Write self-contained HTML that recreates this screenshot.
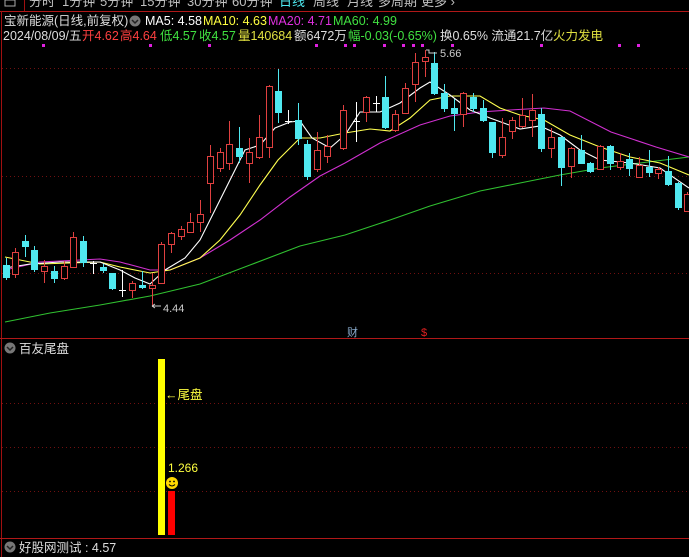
<!DOCTYPE html>
<html><head><meta charset="utf-8"><style>
body{margin:0;background:#000;width:689px;height:557px;overflow:hidden;font-family:"Liberation Sans","Noto Sans CJK SC",sans-serif}
svg{position:absolute;left:0;top:0}
</style></head><body>
<svg width="689" height="557" viewBox="0 0 689 557" font-family="Liberation Sans, Noto Sans CJK SC, sans-serif">
<rect width="689" height="557" fill="#000"/>
<!-- top menu -->
<g font-size="13" fill="#c0c0c0">
<text x="29" y="6">分时</text><text x="62" y="6">1分钟</text><text x="100" y="6">5分钟</text><text x="140" y="6">15分钟</text><text x="187" y="6">30分钟</text><text x="232" y="6">60分钟</text><text x="279" y="6" fill="#4ee8f0">日线</text><text x="313" y="6">周线</text><text x="347" y="6">月线</text><text x="378" y="6">多周期</text><text x="421" y="6">更多 ›</text>
</g>
<rect x="5" y="0" width="10" height="6" fill="none" stroke="#aaa"/>
<line x1="24.5" y1="0" x2="24.5" y2="11" stroke="#a01010"/>
<line x1="0" y1="11.5" x2="689" y2="11.5" stroke="#b01818"/>
<line x1="1.5" y1="11" x2="1.5" y2="557" stroke="#a01010"/>
<!-- header -->
<g font-size="12.5">
<text x="4" y="25" fill="#ddd">宝新能源(日线,前复权)</text>
<circle cx="135" cy="21" r="5.5" fill="#777"/><path d="M132 20l3 3 3-3" stroke="#222" stroke-width="1.5" fill="none"/>
<text x="145" y="25" fill="#fff">MA5: 4.58</text>
<text x="203" y="25" fill="#ffff40">MA10: 4.63</text>
<text x="268" y="25" fill="#e030e0">MA20: 4.71</text>
<text x="333" y="25" fill="#40e040">MA60: 4.99</text>
<text x="3" y="40" fill="#ddd">2024/08/09/五</text>
<text x="82" y="40" fill="#ff4040">开4.62</text>
<text x="120" y="40" fill="#ff4040">高4.64</text>
<text x="160" y="40" fill="#40e040">低4.57</text>
<text x="199" y="40" fill="#40e040">收4.57</text>
<text x="238" y="40" fill="#e0e040">量140684</text>
<text x="294" y="40" fill="#ddd">额6472万</text>
<text x="348" y="40" fill="#40e040">幅-0.03(-0.65%)</text>
<text x="440" y="40" fill="#ddd">换0.65% 流通21.7亿</text>
<text x="553" y="40" fill="#e0e040">火力发电</text>
</g>
<g fill="#e020e0">
<rect x="42" y="44" width="3" height="3"/><rect x="149" y="44" width="3" height="3"/><rect x="208" y="44" width="3" height="3"/><rect x="315" y="44" width="3" height="3"/><rect x="344" y="44" width="3" height="3"/><rect x="353" y="44" width="3" height="3"/><rect x="383" y="44" width="3" height="3"/><rect x="402" y="44" width="3" height="3"/><rect x="412" y="44" width="3" height="3"/><rect x="421" y="44" width="3" height="3"/><rect x="451" y="44" width="3" height="3"/><rect x="540" y="44" width="3" height="3"/><rect x="618" y="44" width="3" height="3"/><rect x="637" y="44" width="3" height="3"/>
</g>
<!-- grid -->
<g stroke="#701010" stroke-dasharray="1 3">
<line x1="2" y1="68.5" x2="689" y2="68.5"/><line x1="2" y1="176.5" x2="689" y2="176.5"/><line x1="2" y1="273.5" x2="689" y2="273.5"/>
<line x1="2" y1="403.5" x2="689" y2="403.5"/><line x1="2" y1="447.5" x2="689" y2="447.5"/><line x1="2" y1="491.5" x2="689" y2="491.5"/>
</g>
<line x1="0" y1="338.5" x2="689" y2="338.5" stroke="#b01818"/>
<line x1="0" y1="538.5" x2="689" y2="538.5" stroke="#b01818"/>
<!-- MA lines -->
<g fill="none" stroke-width="1.1">
<polyline stroke="#30c030" points="5,322 50,313 100,305 150,296 200,284 250,265 300,246 345,235 390,220 430,206 480,191 530,181 560,175 600,168 640,163 689,157"/>
<polyline stroke="#d030d0" points="5,270 40,262 100,259 120,262 150,270 170,270 200,258 230,240 260,220 290,197 320,176 345,163 380,143 420,125 450,116 480,112 510,110 544,108 570,111 611,132 656,147 689,157"/>
<polyline stroke="#ffff50" points="5,257 40,264 100,262 120,267 150,273 170,270 200,258 220,240 240,215 260,185 278,160 300,138 320,138 345,133 370,129 390,131 410,118 430,100 450,96 480,96 500,108 520,115 544,120 570,135 600,147 630,157 660,163 689,175"/>
<polyline stroke="#fff" points="5,268 30,264 60,262 100,262 120,270 135,278 150,284 165,270 185,258 200,240 215,210 230,180 245,150 260,145 275,128 290,122 300,121 312,138 330,148 345,135 360,112 380,112 400,103 420,88 430,82 450,95 470,110 490,118 520,129 540,126 560,135 580,150 600,160 630,163 660,168 689,188"/>
</g>
<!-- candles -->
<g stroke-width="1">
<g stroke="#e04040" fill="#000">
<line x1="15.5" y1="248" x2="15.5" y2="278"/><rect x="12.5" y="252.5" width="6" height="22"/>
<line x1="44.5" y1="260" x2="44.5" y2="283"/><rect x="41.5" y="266.5" width="6" height="5"/>
<line x1="64.5" y1="261" x2="64.5" y2="280"/><rect x="61.5" y="266.5" width="6" height="12"/>
<line x1="73.5" y1="232" x2="73.5" y2="268"/><rect x="70.5" y="237.5" width="6" height="30"/>
<line x1="132.5" y1="281" x2="132.5" y2="298"/><rect x="129.5" y="283.5" width="6" height="7"/>
<line x1="152.5" y1="273" x2="152.5" y2="307"/><rect x="149.5" y="285.5" width="6" height="3"/>
<line x1="161.5" y1="242" x2="161.5" y2="284"/><rect x="158.5" y="244.5" width="6" height="39"/>
<line x1="171.5" y1="232" x2="171.5" y2="253"/><rect x="168.5" y="233.5" width="6" height="11"/>
<line x1="181.5" y1="226" x2="181.5" y2="240"/><rect x="178.5" y="229.5" width="6" height="7"/>
<line x1="190.5" y1="213" x2="190.5" y2="233"/><rect x="187.5" y="222.5" width="6" height="10"/>
<line x1="200.5" y1="200" x2="200.5" y2="232"/><rect x="197.5" y="214.5" width="6" height="8"/>
<line x1="210.5" y1="145" x2="210.5" y2="213"/><rect x="207.5" y="156.5" width="6" height="27"/>
<line x1="220.5" y1="148" x2="220.5" y2="172"/><rect x="217.5" y="152.5" width="6" height="16"/>
<line x1="229.5" y1="121" x2="229.5" y2="170"/><rect x="226.5" y="144.5" width="6" height="19"/>
<line x1="249.5" y1="138" x2="249.5" y2="183"/><rect x="246.5" y="152.5" width="6" height="11"/>
<line x1="259.5" y1="115" x2="259.5" y2="159"/><rect x="256.5" y="137.5" width="6" height="20"/>
<line x1="269.5" y1="85" x2="269.5" y2="158"/><rect x="266.5" y="86.5" width="6" height="61"/>
<line x1="317.5" y1="132" x2="317.5" y2="172"/><rect x="314.5" y="150.5" width="6" height="19"/>
<line x1="327.5" y1="135" x2="327.5" y2="163"/><rect x="324.5" y="146.5" width="6" height="10"/>
<line x1="343.5" y1="105" x2="343.5" y2="150"/><rect x="340.5" y="110.5" width="6" height="38"/>
<line x1="366.5" y1="96" x2="366.5" y2="122"/><rect x="363.5" y="97.5" width="6" height="15"/>
<line x1="395.5" y1="110" x2="395.5" y2="132"/><rect x="392.5" y="114.5" width="6" height="16"/>
<line x1="405.5" y1="83" x2="405.5" y2="114"/><rect x="402.5" y="88.5" width="6" height="25"/>
<line x1="415.5" y1="53" x2="415.5" y2="102"/><rect x="412.5" y="62.5" width="6" height="22"/>
<line x1="425.5" y1="50" x2="425.5" y2="77"/><rect x="422.5" y="57.5" width="6" height="4"/>
<line x1="463.5" y1="92" x2="463.5" y2="127"/><rect x="460.5" y="93.5" width="6" height="21"/>
<line x1="502.5" y1="118" x2="502.5" y2="158"/><rect x="499.5" y="137.5" width="6" height="18"/>
<line x1="512.5" y1="117" x2="512.5" y2="139"/><rect x="509.5" y="120.5" width="6" height="11"/>
<line x1="522.5" y1="98" x2="522.5" y2="128"/><rect x="519.5" y="115.5" width="6" height="11"/>
<line x1="532.5" y1="94" x2="532.5" y2="137"/><rect x="529.5" y="110.5" width="6" height="10"/>
<line x1="551.5" y1="128" x2="551.5" y2="158"/><rect x="548.5" y="137.5" width="6" height="11"/>
<line x1="571.5" y1="147" x2="571.5" y2="178"/><rect x="568.5" y="148.5" width="6" height="18"/>
<line x1="600.5" y1="145" x2="600.5" y2="170"/><rect x="597.5" y="146.5" width="6" height="23"/>
<line x1="620.5" y1="153" x2="620.5" y2="170"/><rect x="617.5" y="161.5" width="6" height="6"/>
<line x1="639.5" y1="157" x2="639.5" y2="177"/><rect x="636.5" y="165.5" width="6" height="12"/>
<line x1="658.5" y1="167" x2="658.5" y2="179"/><rect x="655.5" y="169.5" width="6" height="4"/>
<line x1="687.5" y1="192" x2="687.5" y2="212"/><rect x="684.5" y="194.5" width="6" height="17"/>
</g>
<g stroke="#50e8f0" fill="#50e8f0">
<line x1="6.5" y1="258" x2="6.5" y2="280"/><rect x="3.5" y="265.5" width="6" height="12"/>
<line x1="25.5" y1="235" x2="25.5" y2="257"/><rect x="22.5" y="241.5" width="6" height="5"/>
<line x1="34.5" y1="246" x2="34.5" y2="272"/><rect x="31.5" y="250.5" width="6" height="19"/>
<line x1="54.5" y1="266" x2="54.5" y2="283"/><rect x="51.5" y="271.5" width="6" height="7"/>
<line x1="83.5" y1="236" x2="83.5" y2="267"/><rect x="80.5" y="241.5" width="6" height="21"/>
<line x1="103.5" y1="264" x2="103.5" y2="273"/><rect x="100.5" y="267.5" width="6" height="3"/>
<line x1="112.5" y1="273" x2="112.5" y2="290"/><rect x="109.5" y="273.5" width="6" height="15"/>
<line x1="142.5" y1="271" x2="142.5" y2="289"/><rect x="139.5" y="285.5" width="6" height="2"/>
<line x1="239.5" y1="127" x2="239.5" y2="163"/><rect x="236.5" y="148.5" width="6" height="8"/>
<line x1="278.5" y1="69" x2="278.5" y2="123"/><rect x="275.5" y="91.5" width="6" height="21"/>
<line x1="298.5" y1="103" x2="298.5" y2="145"/><rect x="295.5" y="120.5" width="6" height="18"/>
<line x1="307.5" y1="140" x2="307.5" y2="180"/><rect x="304.5" y="144.5" width="6" height="32"/>
<line x1="385.5" y1="76" x2="385.5" y2="129"/><rect x="382.5" y="97.5" width="6" height="30"/>
<line x1="434.5" y1="52" x2="434.5" y2="95"/><rect x="431.5" y="63.5" width="6" height="30"/>
<line x1="444.5" y1="84" x2="444.5" y2="112"/><rect x="441.5" y="93.5" width="6" height="15"/>
<line x1="454.5" y1="99" x2="454.5" y2="131"/><rect x="451.5" y="108.5" width="6" height="5"/>
<line x1="473.5" y1="93" x2="473.5" y2="112"/><rect x="470.5" y="97.5" width="6" height="11"/>
<line x1="483.5" y1="100" x2="483.5" y2="122"/><rect x="480.5" y="108.5" width="6" height="12"/>
<line x1="492.5" y1="122" x2="492.5" y2="158"/><rect x="489.5" y="122.5" width="6" height="30"/>
<line x1="541.5" y1="108" x2="541.5" y2="152"/><rect x="538.5" y="114.5" width="6" height="34"/>
<line x1="561.5" y1="137" x2="561.5" y2="186"/><rect x="558.5" y="137.5" width="6" height="30"/>
<line x1="581.5" y1="135" x2="581.5" y2="163"/><rect x="578.5" y="150.5" width="6" height="13"/>
<line x1="590.5" y1="162" x2="590.5" y2="173"/><rect x="587.5" y="163.5" width="6" height="8"/>
<line x1="610.5" y1="145" x2="610.5" y2="170"/><rect x="607.5" y="146.5" width="6" height="17"/>
<line x1="629.5" y1="153" x2="629.5" y2="176"/><rect x="626.5" y="159.5" width="6" height="9"/>
<line x1="649.5" y1="150" x2="649.5" y2="177"/><rect x="646.5" y="167.5" width="6" height="5"/>
<line x1="668.5" y1="156" x2="668.5" y2="186"/><rect x="665.5" y="171.5" width="6" height="13"/>
<line x1="678.5" y1="182" x2="678.5" y2="210"/><rect x="675.5" y="183.5" width="6" height="24"/>
</g>
<g stroke="#fff">
<line x1="93.5" y1="261" x2="93.5" y2="274"/><line x1="90" y1="263.5" x2="97" y2="263.5"/>
<line x1="122.5" y1="270" x2="122.5" y2="297"/><line x1="119" y1="290.5" x2="126" y2="290.5"/>
<line x1="288.5" y1="110" x2="288.5" y2="124"/><line x1="285" y1="121.5" x2="292" y2="121.5"/>
<line x1="356.5" y1="102" x2="356.5" y2="142"/><line x1="353" y1="121.5" x2="360" y2="121.5"/>
<line x1="376.5" y1="96" x2="376.5" y2="112"/><line x1="373" y1="103.5" x2="380" y2="103.5"/>
</g>
</g>
<!-- labels -->
<g font-size="11" fill="#ccc">
<text x="163" y="312">4.44</text><path d="M152 306h9M152 306l3-2M152 306l3 2" stroke="#ccc" fill="none"/>
<text x="440" y="57">5.66</text><path d="M426 50l3 0 0 3 8 0" stroke="#ccc" fill="none"/>
</g>
<text x="347" y="336" font-size="11" fill="#8ac" >财</text>
<text x="421" y="336" font-size="11" fill="#e02020">$</text>
<!-- lower panel -->
<circle cx="10" cy="348" r="5.5" fill="#777"/><path d="M7 347l3 3 3-3" stroke="#222" stroke-width="1.5" fill="none"/>
<text x="19" y="353" font-size="12.5" fill="#ddd">百友尾盘</text>
<rect x="158" y="359" width="7" height="176" fill="#ffff00"/>
<rect x="168" y="491" width="7" height="44" fill="#ff0000"/>
<text x="165" y="399" font-size="12.5" fill="#ffff40">←尾盘</text>
<text x="168" y="472" font-size="12" fill="#ffff40">1.266</text>
<circle cx="172" cy="483" r="6" fill="#ffd800"/>
<circle cx="170" cy="481.5" r="0.9" fill="#000"/><circle cx="174" cy="481.5" r="0.9" fill="#000"/>
<path d="M169 484.5q3 3 6 0" stroke="#000" fill="none"/>
<!-- bottom -->
<circle cx="10" cy="547" r="5.5" fill="#777"/><path d="M7 546l3 3 3-3" stroke="#222" stroke-width="1.5" fill="none"/>
<text x="19" y="552" font-size="12.5" fill="#ddd">好股网测试 : 4.57</text>
</svg>
</body></html>
